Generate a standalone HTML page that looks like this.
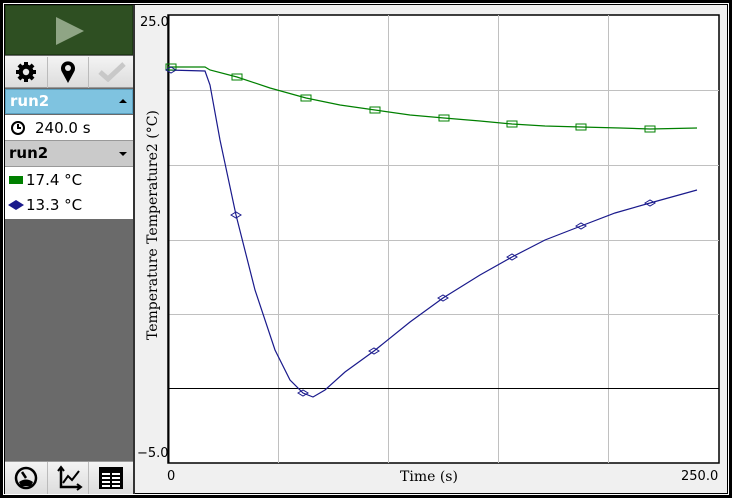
<!DOCTYPE html>
<html><head><meta charset="utf-8"><style>
*{margin:0;padding:0;box-sizing:border-box}
body{width:732px;height:498px;background:#fff;position:relative;overflow:hidden;font-family:"DejaVu Sans","Liberation Sans",sans-serif}
.a{position:absolute}
</style></head><body>
<div class="a" style="left:0;top:0;width:732px;height:498px;border:3px solid #000;background:#fff"></div>
<div class="a" style="left:4px;top:4px;width:724px;height:490px;border:1px solid #000;background:#f0f0f0"></div>
<!-- left panel -->
<div class="a" style="left:5px;top:5px;width:128px;height:489px;background:#6a6a6a"></div>
<div class="a" style="left:5px;top:5px;width:128px;height:50px;background:#2e4f22;border:1px solid #1e3a15"></div>
<svg class="a" style="left:55px;top:16px" width="30" height="30"><polygon points="1,1 29,15 1,29" fill="#8fa585"/></svg>
<div class="a" style="left:5px;top:56px;width:128px;height:32px;background:linear-gradient(#f4f4f4,#dcdcdc);border-bottom:1px solid #999"></div>
<div class="a" style="left:47px;top:57px;width:1px;height:31px;background:#bbb"></div>
<div class="a" style="left:88px;top:57px;width:1px;height:31px;background:#bbb"></div>
<svg class="a" style="left:14px;top:60px" width="24" height="24" viewBox="0 0 24 24"><g fill="#000"><circle cx="12" cy="12" r="7.5"/><rect x="10" y="2" width="4" height="20"/><rect x="2" y="10" width="20" height="4"/><rect x="10" y="2" width="4" height="20" transform="rotate(45 12 12)"/><rect x="10" y="2" width="4" height="20" transform="rotate(-45 12 12)"/></g><circle cx="12" cy="12" r="3.2" fill="#e8e8e8"/></svg>
<svg class="a" style="left:58px;top:60px" width="20" height="24" viewBox="0 0 20 24"><path d="M10 23 L4 12 A7 7 0 1 1 16 12 Z" fill="#000"/><circle cx="10" cy="8" r="3" fill="#e8e8e8"/></svg>
<svg class="a" style="left:98px;top:62px" width="28" height="20" viewBox="0 0 28 20"><path d="M2 10 L10 17 L26 2" stroke="#c8c8c8" stroke-width="5" fill="none"/></svg>
<div class="a" style="left:5px;top:89px;width:128px;height:25px;background:#7fc3e0;border:1px solid #5aa0c0;color:#fff;font-weight:bold;font-size:15px;line-height:23px;padding-left:4px">run2</div>
<svg class="a" style="left:119px;top:99px" width="8" height="5"><polygon points="0,4 4,0 8,4" fill="#000"/></svg>
<div class="a" style="left:5px;top:115px;width:128px;height:26px;background:#fff;border-bottom:1px solid #999;font-size:15px;line-height:26px;padding-left:30px;color:#000">240.0 s</div>
<svg class="a" style="left:10px;top:120px" width="16" height="16" viewBox="0 0 16 16"><circle cx="8" cy="8" r="6" stroke="#000" stroke-width="2" fill="none"/><path d="M8 4V8H11" stroke="#000" stroke-width="2" fill="none"/></svg>
<div class="a" style="left:5px;top:141px;width:128px;height:26px;background:#cacaca;border-bottom:1px solid #999;font-weight:bold;font-size:15px;line-height:25px;padding-left:4px;color:#000">run2</div>
<svg class="a" style="left:119px;top:152px" width="8" height="5"><polygon points="0,0 8,0 4,4" fill="#000"/></svg>
<div class="a" style="left:5px;top:167px;width:128px;height:52px;background:#fff"></div>
<div class="a" style="left:9px;top:176px;width:14px;height:8px;background:#008000"></div>
<div class="a" style="left:26px;top:168px;font-size:15px;line-height:24px;color:#000">17.4 °C</div>
<svg class="a" style="left:8px;top:200px" width="16" height="10"><polygon points="0,5 8,0 16,5 8,10" fill="#1a1a8c"/></svg>
<div class="a" style="left:26px;top:193px;font-size:15px;line-height:24px;color:#000">13.3 °C</div>
<div class="a" style="left:5px;top:461px;width:128px;height:33px;background:linear-gradient(#f4f4f4,#dcdcdc);border-top:1px solid #999"></div>
<div class="a" style="left:47px;top:462px;width:1px;height:32px;background:#bbb"></div>
<div class="a" style="left:88px;top:462px;width:1px;height:32px;background:#bbb"></div>
<svg class="a" style="left:14px;top:466px" width="24" height="24" viewBox="0 0 24 24"><circle cx="12" cy="12" r="10" stroke="#000" stroke-width="2.5" fill="none"/><path d="M12 12 L8 6" stroke="#000" stroke-width="2.5"/><path d="M5 16 Q12 11 19 16 L17 20 H7Z" fill="#000"/></svg>
<svg class="a" style="left:55px;top:465px" width="28" height="26" viewBox="0 0 28 26"><path d="M6 2V22H26" stroke="#000" stroke-width="2.5" fill="none"/><path d="M3 6L6 2L9 6M22 19L26 22L22 25" stroke="#000" stroke-width="2" fill="none"/><path d="M8 18L13 11L17 15L24 6" stroke="#000" stroke-width="2" fill="none"/></svg>
<svg class="a" style="left:98px;top:466px" width="26" height="24" viewBox="0 0 26 24"><rect x="1" y="1" width="24" height="22" fill="#000"/><g fill="#fff"><rect x="4" y="7" width="8" height="2"/><rect x="14" y="7" width="8" height="2"/><rect x="4" y="11" width="8" height="2"/><rect x="14" y="11" width="8" height="2"/><rect x="4" y="15" width="8" height="2"/><rect x="14" y="15" width="8" height="2"/><rect x="4" y="19" width="8" height="2"/><rect x="14" y="19" width="8" height="2"/></g></svg>
<div class="a" style="left:133px;top:5px;width:2px;height:489px;background:#333"></div>
<!-- graph labels -->
<div class="a" style="left:140px;top:15px;font-size:13px;color:#000">25.0</div>
<div class="a" style="left:137px;top:446px;font-size:13px;color:#000">−5.0</div>
<div class="a" style="left:167px;top:469px;font-size:13px;color:#000">0</div>
<div class="a" style="left:681px;top:469px;font-size:13px;color:#000">250.0</div>
<div class="a" style="left:400px;top:469px;font-size:14px;color:#000;font-family:'DejaVu Serif','Liberation Serif',serif">Time (s)</div>
<div class="a" style="left:53px;top:232px;width:200px;text-align:center;font-size:14px;color:#000;font-family:'DejaVu Serif','Liberation Serif',serif;transform:rotate(-90deg);white-space:nowrap;line-height:16px">Temperature Temperature2 (°C)</div>
<svg class="a" style="left:0;top:0" width="732" height="498">
<rect x="168" y="15" width="551" height="448" fill="#fff" stroke="#000" stroke-width="1.5"/>
<g stroke="#c0c0c0" stroke-width="1">
<line x1="278.5" y1="15" x2="278.5" y2="463"/><line x1="388.5" y1="15" x2="388.5" y2="463"/><line x1="498.5" y1="15" x2="498.5" y2="463"/><line x1="608.5" y1="15" x2="608.5" y2="463"/>
<line x1="168" y1="90.5" x2="719" y2="90.5"/><line x1="168" y1="165.5" x2="719" y2="165.5"/><line x1="168" y1="240.5" x2="719" y2="240.5"/><line x1="168" y1="314.5" x2="719" y2="314.5"/>
</g>
<line x1="168" y1="388.5" x2="719" y2="388.5" stroke="#000"/>
<line x1="168.5" y1="15" x2="168.5" y2="463" stroke="#000" stroke-width="2"/>
<polyline fill="none" stroke="#008000" stroke-width="1.2" points="168,67 205,67 210,70 237,77 270,88 306,98 340,105 375,110 410,115 444,118 480,121 512,124 545,126 581,127 620,128 650,129 697,128"/>
<polyline fill="none" stroke="#1a1a8c" stroke-width="1.2" points="168,70 205,71 210,85 220,140 236,215 255,290 275,350 290,380 303,393 313,397 325,390 345,372 374,351 410,322 443,298 480,275 512,257 545,240 581,226 615,213 650,203 697,190"/>
<g fill="none" stroke="#008000"><rect x="166" y="64" width="10" height="6"/><rect x="232" y="74" width="10" height="6"/><rect x="301" y="95" width="10" height="6"/><rect x="370" y="107" width="10" height="6"/><rect x="439" y="115" width="10" height="6"/><rect x="507" y="121" width="10" height="6"/><rect x="576" y="124" width="10" height="6"/><rect x="645" y="126" width="10" height="6"/></g>
<g fill="none" stroke="#1a1a8c"><polygon points="231,215 236,212 241,215 236,218"/><polygon points="298,393 303,390 308,393 303,396"/><polygon points="369,351 374,348 379,351 374,354"/><polygon points="438,298 443,295 448,298 443,301"/><polygon points="507,257 512,254 517,257 512,260"/><polygon points="576,226 581,223 586,226 581,229"/><polygon points="645,203 650,200 655,203 650,206"/><polygon points="166,70 171,67 176,70 171,73"/></g>
</svg>
</body></html>
